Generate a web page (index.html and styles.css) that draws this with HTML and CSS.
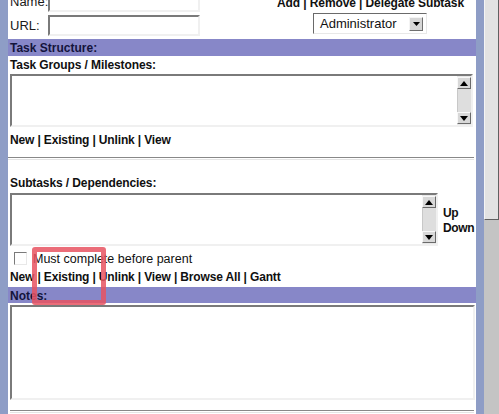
FILE: index.html
```html
<!DOCTYPE html>
<html>
<head>
<meta charset="utf-8">
<link rel="stylesheet" href="styles.css">
</head>
<body>
<div class="page">
  <div class="edge"></div>
  <div class="main">
    <div class="top">
      <div class="fields">
        <div class="field"><span class="lbl">Name:</span><span class="input"></span></div>
        <div class="field"><span class="lbl">URL:</span><span class="input"></span></div>
      </div>
      <div class="actions">
        <div class="links">Add | Remove | Delegate Subtask</div>
        <div class="select"><span class="sel-text">Administrator</span><span class="dd"><svg width="7" height="4" viewBox="0 0 7 4"><path d="M0 0H7L3.5 4Z" fill="#000"/></svg></span></div>
      </div>
    </div>

    <div class="head">Task Structure:</div>
    <div class="label">Task Groups / Milestones:</div>
    <div class="ta ta-groups">
      <div class="ta-body"></div>
      <div class="vscroll">
        <span class="btn"><svg width="8" height="5" viewBox="0 0 8 5"><path d="M0 5H8L4 0Z" fill="#000"/></svg></span>
        <span class="track"></span>
        <span class="btn"><svg width="8" height="5" viewBox="0 0 8 5"><path d="M0 0H8L4 5Z" fill="#000"/></svg></span>
      </div>
    </div>
    <div class="links-row">New | Existing | Unlink | View</div>
    <div class="rule"></div>

    <div class="label label-sub">Subtasks / Dependencies:</div>
    <div class="sub-row">
      <div class="ta ta-sub">
        <div class="ta-body"></div>
        <div class="vscroll">
          <span class="btn"><svg width="8" height="5" viewBox="0 0 8 5"><path d="M0 5H8L4 0Z" fill="#000"/></svg></span>
          <span class="track"></span>
          <span class="btn"><svg width="8" height="5" viewBox="0 0 8 5"><path d="M0 0H8L4 5Z" fill="#000"/></svg></span>
        </div>
      </div>
      <div class="updown"><span>Up</span><span>Down</span></div>
    </div>
    <div class="check-row"><span class="box"></span><span>Must complete before parent</span></div>
    <div class="links-row links-row2">New | Existing | Unlink | View | Browse All | Gantt</div>

    <div class="head head-notes">Notes:</div>
    <div class="ta ta-notes"><div class="ta-body"></div></div>
    <div class="rule rule-bottom"></div>
  </div>
  <div class="edge edge-right"></div>
  <div class="scrollbar"><div class="thumb"></div></div>
  <div class="mark"></div>
</div>
</body>
</html>
```

FILE: styles.css
```css
html, body {
  margin: 0;
  padding: 0;
  background: #ffffff;
  overflow: hidden;
}
body {
  font-family: "Liberation Sans", Arial, sans-serif;
  font-size: 12px;
  color: #101010;
}
.page {
  position: relative;
  display: flex;
  width: 499px;
  height: 414px;
  overflow: hidden;
}
.edge {
  width: 8px;
  flex: none;
  background: #8e9dc6;
}
.main {
  width: 468px;
  flex: none;
  background: #fff;
}
.top {
  display: flex;
  justify-content: space-between;
  margin-top: -10px;
  height: 49px;
  padding-left: 2px;
}
.fields {
  display: flex;
  flex-direction: column;
  gap: 3px;
  padding-top: 1px;
}
.field {
  display: flex;
  align-items: center;
  height: 21px;
  font-size: 13px;
}
.lbl {
  width: 38px;
  color: #1a1a1a;
}
.input {
  display: block;
  width: 148px;
  height: 17px;
  border-top: 2px solid #7a7a7a;
  border-left: 2px solid #7a7a7a;
  border-bottom: 2px solid #f0f0f0;
  border-right: 2px solid #f0f0f0;
  background: #fff;
}
.actions {
  display: flex;
  flex-direction: column;
  align-items: flex-end;
  padding-right: 12px;
}
.links {
  font-weight: bold;
  font-size: 12px;
  line-height: 16px;
  padding-top: 5px;
  color: #111;
  letter-spacing: -0.1px;
}
.select {
  display: flex;
  align-items: center;
  justify-content: space-between;
  box-sizing: border-box;
  width: 114px;
  height: 21px;
  margin-top: 2px;
  margin-right: 37px;
  padding: 0 3px 0 6px;
  border-top: 1px solid #6a6a6a;
  border-left: 1px solid #6a6a6a;
  border-bottom: 1px solid #e8e8e8;
  border-right: 1px solid #e8e8e8;
  font-size: 13px;
  color: #111;
}
.dd {
  display: flex;
  align-items: center;
  justify-content: center;
  width: 12px;
  height: 12px;
  background: #d6d6d6;
  border-top: 1px solid #f4f4f4;
  border-left: 1px solid #f4f4f4;
  border-bottom: 1px solid #707070;
  border-right: 1px solid #707070;
}
.head {
  height: 17px;
  line-height: 18px;
  background: #8787c8;
  color: #14143c;
  font-weight: bold;
  padding-left: 2px;
}
.label {
  font-weight: bold;
  line-height: 16px;
  padding-left: 2px;
  margin-top: 1px;
  letter-spacing: -0.1px;
}
.ta {
  display: flex;
  box-sizing: border-box;
  margin-left: 2px;
  border-top: 2px solid #7a7a7a;
  border-left: 2px solid #7a7a7a;
  border-bottom: 2px solid #f0f0f0;
  border-right: 2px solid #f0f0f0;
  background: #fff;
}
.ta-body {
  flex: 1;
}
.ta-groups {
  width: 463px;
  height: 53px;
  margin-top: 1px;
}
.vscroll {
  display: flex;
  flex-direction: column;
  width: 14px;
  padding: 1px 0;
  background: #e8e8e8;
}
.btn {
  display: flex;
  align-items: center;
  justify-content: center;
  height: 10px;
  background: #d8d8d8;
  border-top: 1px solid #f8f8f8;
  border-left: 1px solid #f8f8f8;
  border-bottom: 1px solid #6a6a6a;
  border-right: 1px solid #6a6a6a;
}
.track {
  flex: 1;
  background: #dedede;
  border-left: 1px solid #c8c8c8;
}
.links-row {
  font-weight: bold;
  line-height: 16px;
  padding-left: 2px;
  margin-top: 5px;
  letter-spacing: -0.15px;
}
.rule {
  height: 1px;
  margin-top: 9px;
  margin-right: 2px;
  border-top: 1px solid #888;
  border-bottom: 1px solid #e4e4e4;
}
.label-sub {
  margin-top: 15px;
}
.sub-row {
  display: flex;
  align-items: center;
  gap: 5px;
  margin-top: 2px;
}
.ta-sub {
  width: 428px;
  height: 53px;
  flex: none;
}
.updown {
  display: flex;
  flex-direction: column;
  flex: none;
  font-weight: bold;
  line-height: 15px;
  padding-top: 2px;
  letter-spacing: -0.4px;
}
.check-row {
  display: flex;
  align-items: center;
  height: 17px;
  margin-top: 4px;
  padding-left: 6px;
  gap: 6px;
  font-size: 12.5px;
}
.box {
  display: block;
  width: 11px;
  height: 11px;
  border-top: 1px solid #7a7a7a;
  border-left: 1px solid #7a7a7a;
  border-bottom: 1px solid #e8e8e8;
  border-right: 1px solid #e8e8e8;
}
.links-row2 {
  margin-top: 2px;
}
.head-notes {
  margin-top: 2px;
  height: 16px;
}
.ta-notes {
  width: 465px;
  height: 95px;
  margin-top: 2px;
}
.rule-bottom {
  margin-top: 10px;
  margin-left: 2px;
}
.scrollbar {
  width: 15px;
  flex: none;
  background: #c4c4c4;
}
.thumb {
  height: 220px;
  box-sizing: border-box;
  background: #e2e2e2;
  border-left: 1px solid #f4f4f4;
  border-bottom: 1px solid #606060;
  border-right: 1px solid #606060;
}
.mark {
  position: absolute;
  left: 32px;
  top: 247px;
  width: 64px;
  height: 48px;
  border: 5px solid rgba(232, 84, 98, 0.85);
  border-radius: 3px;
}
```
